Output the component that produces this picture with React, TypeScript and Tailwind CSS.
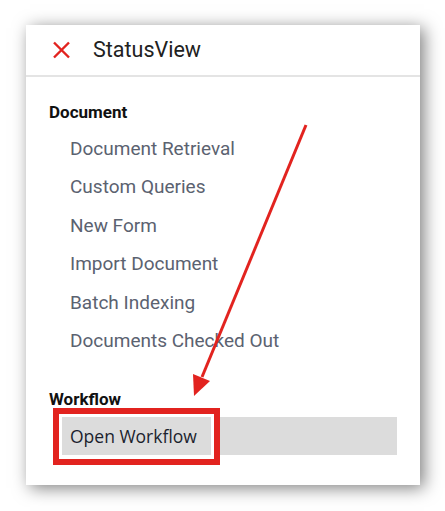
const documentItems = [
	"Document Retrieval",
	"Custom Queries",
	"New Form",
	"Import Document",
	"Batch Indexing",
	"Documents Checked Out",
];

export default function App() {
	return (
		<div className="relative w-[445px] h-[511px] bg-white pt-[25px] pl-[26px] font-['Roboto',sans-serif] overflow-hidden">
			<div className="relative w-[394px] h-[460px] bg-white shadow-[4px_3px_16px_rgba(0,0,0,0.5)]">
				{/* header */}
				<div className="flex items-center h-[52px] pl-[26px] border-b-2 border-[#e4e4e4]">
					<svg width="19" height="18" viewBox="0 0 19 18" className="shrink-0">
						<path d="M2 1.5 L17 16.5 M17 1.5 L2 16.5" stroke="#e2231f" strokeWidth="2.4" fill="none" />
					</svg>
					<span className="ml-[22px] text-[21.5px] text-[#212121] leading-none">StatusView</span>
				</div>

				<div className="pt-[25px] pl-[23px] pr-[23px]">
					<div className="text-[17px] leading-[20px] font-bold text-[#111]">Document</div>
					<ul className="mt-[8px]">
						{documentItems.map((item) => (
							<li key={item} className="h-[38.4px] leading-[38.4px] pl-[21px] text-[19px] text-[#5b6270]">
								{item}
							</li>
						))}
					</ul>
					<div className="mt-[29px] text-[17px] leading-[20px] font-bold text-[#111]">Workflow</div>
					<div className="mt-[8px] ml-[6px] h-[38px] flex items-center pl-[15px] bg-[#dcdcdc] text-[17.5px] text-[#1b1f2e] font-['Open_Sans',sans-serif]">
						Open Workflow
					</div>
				</div>

				{/* highlight box */}
				<div className="absolute left-[27px] top-[383px] w-[167px] h-[57px] border-[6px] border-[#e2231f] shadow-[inset_0_0_0_3px_#fff]" />
			</div>

			{/* arrow annotation */}
			<svg className="absolute inset-0 pointer-events-none" width="445" height="511" viewBox="0 0 445 511">
				<line x1="306" y1="125" x2="202" y2="377" stroke="#e2231f" strokeWidth="3" />
				<polygon points="194,396 210,381 193,374" fill="#e2231f" />
			</svg>
		</div>
	);
}
